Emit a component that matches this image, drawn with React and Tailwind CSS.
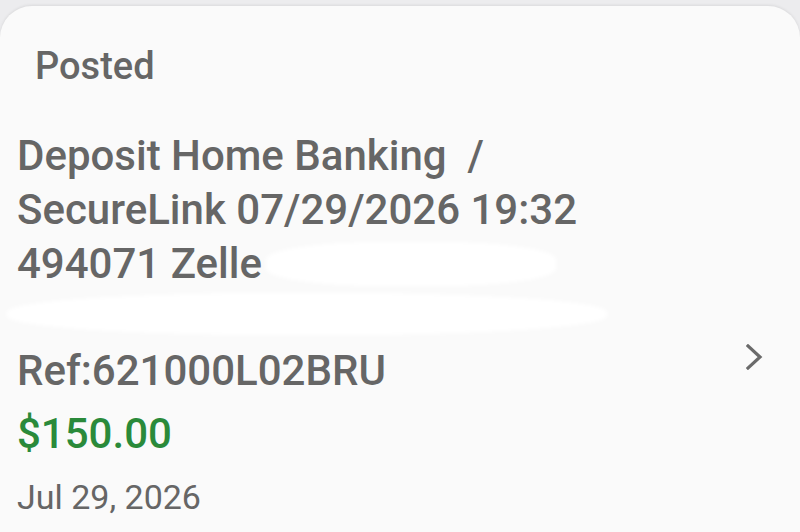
import React from 'react';

// Detalle de un movimiento (depósito Zelle) — tarjeta única
const Chevron = () => (
  <svg width="18" height="26" viewBox="0 0 18 26" fill="none" className="shrink-0">
    <polyline points="2,2 14,13 2,24" stroke="#6a6a6a" strokeWidth="3.2" strokeLinecap="square" />
  </svg>
);

const App = () => {
  return (
    <div className="w-[800px] h-[532px] overflow-hidden bg-[#ececee] pt-[6px] font-['Roboto','Liberation_Sans',sans-serif]">
      <div className="h-full rounded-t-[32px] bg-[#fafafa] shadow-[0_-1px_3px_rgba(0,0,0,0.08)] pl-[17px] pr-[36px] pt-[41px] text-[#666666] font-medium">
        <div className="ml-[18px] text-[38px] leading-[38px]">Posted</div>

        <div className="mt-[44px] text-[42px] leading-[54px]">
          <div>Deposit Home Banking&nbsp; /</div>
          <div>SecureLink 07/29/2026 19:32</div>
          <div className="flex items-center">
            <span>494071 Zelle</span>
            {/* redacción */}
            <span className="ml-[4px] inline-block h-[44px] w-[290px] rounded-[40%] bg-white blur-[2px]"></span>
          </div>
          <div className="-ml-[10px] mt-[2px] h-[42px] w-[600px] rounded-[45%] bg-white blur-[2px]"></div>
        </div>

        <div className="mt-[12px] flex items-start justify-between">
          <div>
            <div className="text-[42px] leading-[48px]">Ref:621000L02BRU</div>
            <div className="mt-[15px] text-[42px] leading-[48px] text-[#2a8a3a]">$150.00</div>
            <div className="mt-[19px] text-[34px] leading-[40px] font-normal">Jul 29, 2026</div>
          </div>
          <div className="-mt-[3px]">
            <Chevron />
          </div>
        </div>
      </div>
    </div>
  );
};

export default App;
